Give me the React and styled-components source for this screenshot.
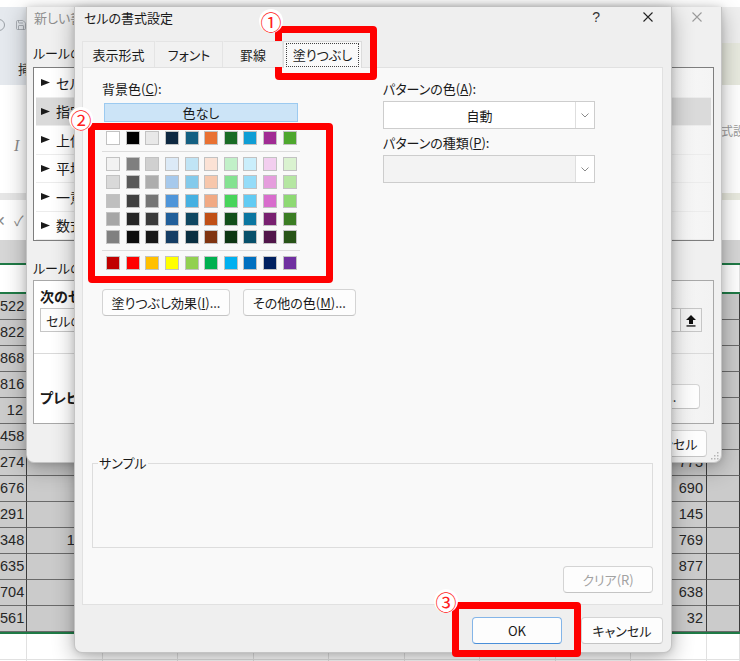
import React from 'react';
import styled, { createGlobalStyle } from 'styled-components';
import { Save } from 'lucide-react';

const GlobalStyle = createGlobalStyle`
  html, body { margin: 0; padding: 0; background: #ffffff; }
  body {
    font-family: "Noto Sans CJK JP", "Noto Sans", sans-serif;
    font-feature-settings: "palt";
    color: #1b1b1b;
  }
  * { box-sizing: border-box; }
`;

const THEME = ['#FFFFFF', '#000000', '#E8E8E8', '#0E2841', '#156082', '#E97132', '#196B24', '#0F9ED5', '#A02B93', '#4EA72E'];
const SHADES = [
  ['#F2F2F2', '#7F7F7F', '#D0D0D0', '#DCEAF7', '#C0E4F5', '#FBE2D5', '#C1F0C8', '#CAEEFB', '#F2CEEF', '#DAF2D0'],
  ['#D9D9D9', '#595959', '#ADADAD', '#A6C9EC', '#83CAEB', '#F7C7AC', '#84E291', '#95DCF8', '#E59EDD', '#B5E6A2'],
  ['#BFBFBF', '#404040', '#757575', '#4E95D9', '#45B0E1', '#F1A983', '#47D45A', '#61CBF3', '#D86DCD', '#8ED973'],
  ['#A6A6A6', '#262626', '#3A3A3A', '#215F9A', '#0F4761', '#C04F15', '#124F1A', '#0B76A0', '#782170', '#3B7D23'],
  ['#808080', '#0D0D0D', '#171717', '#153D64', '#0A2F41', '#803410', '#0D3512', '#074F6A', '#501549', '#275317'],
];
const STANDARD = ['#C00000', '#FF0000', '#FFC000', '#FFFF00', '#92D050', '#00B050', '#00B0F0', '#0070C0', '#002060', '#7030A0'];

const LEFT_NUMS = [522, 822, 868, 816, 12, 458, 274, 676, 291, 348, 635, 704, 561];
const B_NUMS = ['', '', '', '', '', '', '', '', '', '1203', '', '', ''];
const RIGHT_NUMS = [311, 905, 246, 583, 127, 460, 773, 690, 145, 769, 877, 638, 32];

const RULE_TYPES = [
  'セルの値に基づいてすべてのセルを書式設定',
  '指定の値を含むセルだけを書式設定',
  '上位または下位に入る値だけを書式設定',
  '平均より上または下の値だけを書式設定',
  '一意の値または重複する値だけを書式設定',
  '数式を使用して、書式設定するセルを決定',
];

/* ---------- screen ---------- */

const Screen = styled.div`
  position: relative;
  width: 740px;
  height: 661px;
  overflow: hidden;
  background: #ffffff;
`;

/* ---------- excel backdrop ---------- */

const Excel = styled.div`
  width: 740px;
  height: 661px;
  display: flex;
  flex-direction: column;
  background: #ffffff;
`;

const Strip = styled.div`
  flex: none;
  height: ${(p) => p.$h}px;
  display: flex;
  justify-content: space-between;
  align-items: stretch;
  background: linear-gradient(90deg, ${(p) => p.$left} 0 50%, ${(p) => p.$right || p.$left} 50% 100%);
  overflow: hidden;
`;

const StripSide = styled.div`
  display: flex;
  align-items: ${(p) => p.$align || 'center'};
  gap: ${(p) => p.$gap || 0}px;
  padding: ${(p) => p.$pad || '0'};
  width: ${(p) => p.$w}px;
  font-size: ${(p) => p.$size || 13}px;
  color: ${(p) => p.$color || '#333'};
  white-space: nowrap;
`;

const ToggleStub = styled.span`
  width: 12px;
  height: 12px;
  margin-left: -7px;
  border: 1.5px solid #9aa0a6;
  border-radius: 50%;
`;

const ItalicMark = styled.span`
  font-family: "Liberation Serif", serif;
  font-style: italic;
  font-size: 16px;
  color: #8a8a8a;
`;

const GreenRule = styled.div`
  flex: none;
  height: 2px;
  background: #1f7a46;
`;

const SheetRow = styled.div`
  flex: none;
  display: grid;
  grid-template-columns: 27px 76px repeat(7, 75.43px) 76px 1fr;
  height: ${(p) => p.$h}px;
  background: ${(p) => p.$bg};
`;

const Cell = styled.div`
  border-right: 1px solid ${(p) => p.$v};
  border-bottom: 1px solid ${(p) => p.$hz};
  padding-right: 3px;
  font-family: "Liberation Sans", Arial, sans-serif;
  font-size: 14.5px;
  line-height: 25px;
  text-align: right;
  color: #262626;
  white-space: nowrap;
  overflow: hidden;
`;

function SheetLine({ h, bg, v, hz, values }) {
  return (
    <SheetRow $h={h} $bg={bg}>
      {values.map((val, i) => (
        <Cell key={i} $v={v} $hz={hz}>{val}</Cell>
      ))}
    </SheetRow>
  );
}

function ExcelBackdrop() {
  const blank = Array(11).fill('');
  return (
    <Excel>
      <Strip $h={7} $left="#ffffff" />
      <Strip $h={36} $left="#e5e9ee" $right="#efefef">
        <StripSide $gap={10} $pad="0 0 0 0">
          <ToggleStub />
          <Save size={12} color="#9aa0a6" strokeWidth={1.6} />
        </StripSide>
      </Strip>
      <Strip $h={42} $left="#e5e9ee" $right="#e8eadf">
        <StripSide $align="flex-end" $pad="0 0 7px 18px">挿入</StripSide>
      </Strip>
      <Strip $h={108} $left="#ffffff">
        <StripSide $align="flex-start" $pad="52px 0 0 14px"><ItalicMark>I</ItalicMark></StripSide>
        <StripSide $align="flex-start" $pad="37px 0 0 0" $w={19} $size={12} $color="#9c9c9c">式設定</StripSide>
      </Strip>
      <Strip $h={7} $left="#e6e6e6" $right="#e9eadf" />
      <Strip $h={40} $left="#ffffff">
        <StripSide $gap={8} $pad="0 0 0 0" $color="#8a8a8a" $size={14}>
          <span style={{ marginLeft: -6 }}>✕</span>
          <span>✓</span>
        </StripSide>
      </Strip>
      <Strip $h={23} $left="#d6d6d6" />
      <GreenRule />
      <SheetLine h={27} bg="#ffffff" v="#e2e2e2" hz="#ffffff" values={blank} />
      <GreenRule />
      {LEFT_NUMS.map((n, i) => (
        <SheetLine
          key={i}
          h={26}
          bg="#cbcbcb"
          v="#3c3c3c"
          hz="#6a6a6a"
          values={[n, B_NUMS[i], '', '', '', '', '', '', '', RIGHT_NUMS[i], '']}
        />
      ))}
      <GreenRule />
      <SheetLine h={26} bg="#ffffff" v="#e1e1e1" hz="#e1e1e1" values={blank} />
      <SheetLine h={26} bg="#ffffff" v="#e1e1e1" hz="#e1e1e1" values={blank} />
    </Excel>
  );
}

/* ---------- shared dialog parts ---------- */

const Window = styled.div`
  position: absolute;
  left: ${(p) => p.$x}px;
  top: ${(p) => p.$y}px;
  width: ${(p) => p.$w}px;
  height: ${(p) => p.$h}px;
  display: flex;
  flex-direction: column;
  padding: ${(p) => p.$pad};
  background: ${(p) => p.$bg};
  border: 1px solid #c4c4c4;
  border-top: none;
  border-radius: 0 0 8px 8px;
  box-shadow: 0 6px 22px rgba(0, 0, 0, 0.3), 0 0 6px rgba(0, 0, 0, 0.12);
  font-size: 13px;
`;

const TitleBar = styled.div`
  flex: none;
  height: 20px;
  display: flex;
  align-items: center;
  justify-content: space-between;
  padding: 0 ${(p) => p.$right}px 0 ${(p) => p.$left}px;
  color: ${(p) => (p.$inactive ? '#8e8e8e' : '#1a1a1a')};
  white-space: nowrap;
`;

const TitleActions = styled.div`
  display: flex;
  align-items: center;
  gap: 43px;
`;

const HelpMark = styled.span`
  font-family: "Liberation Sans", Arial, sans-serif;
  font-size: 14px;
  color: #333;
`;

function CloseIcon({ color }) {
  return (
    <svg width="10" height="10" viewBox="0 0 10 10">
      <path d="M0.5 0.5 L9.5 9.5 M9.5 0.5 L0.5 9.5" stroke={color} strokeWidth="1.1" />
    </svg>
  );
}

const Label = styled.div`
  flex: none;
  margin-top: ${(p) => p.$mt || 0}px;
  line-height: 16px;
  font-size: ${(p) => p.$size || 13}px;
  font-weight: ${(p) => (p.$bold ? 700 : 400)};
  white-space: nowrap;
  color: #1a1a1a;
`;

const Button = styled.button`
  flex: none;
  width: ${(p) => p.$w}px;
  height: ${(p) => p.$h || 27}px;
  margin-top: ${(p) => p.$mt || 0}px;
  padding: 0;
  font: inherit;
  font-size: 13px;
  white-space: nowrap;
  color: ${(p) => (p.$disabled ? '#a2a2a2' : '#1a1a1a')};
  background: #fdfdfd;
  border: 1px solid ${(p) => (p.$primary ? '#84b5e8' : '#d4d4d4')};
  border-bottom-color: ${(p) => (p.$primary ? '#4a8fd9' : '#c4c4c4')};
  border-radius: 4px;
`;

/* ---------- rule dialog (behind) ---------- */

const ListBox = styled.div`
  flex: none;
  margin-top: 6px;
  height: 174px;
  padding: 1px;
  border: 1px solid #7e7e7e;
  background: linear-gradient(90deg, #ffffff 0 80%, #f4f4f4 100%);
`;

const ListRow = styled.div`
  display: flex;
  align-items: center;
  gap: 6px;
  height: 28.5px;
  margin: 0 1px;
  padding-left: 5px;
  font-size: 14px;
  white-space: nowrap;
  border-bottom: 1px solid #ececec;
  background: ${(p) => (p.$selected ? '#dadada' : 'transparent')};
`;

function Pointer() {
  return (
    <svg width="9" height="7" viewBox="0 0 9 7">
      <polygon points="0,0 9,3.5 0,7" fill="#1a1a1a" />
    </svg>
  );
}

const EditBox = styled.div`
  flex: none;
  margin-top: 4px;
  height: 144px;
  display: flex;
  flex-direction: column;
  padding: 7px 11px 0 6px;
  border: 1px solid #a8a8a8;
  background: linear-gradient(90deg, #ffffff 0 80%, #f2f2f2 100%);
`;

const ConditionRow = styled.div`
  display: flex;
  gap: 8px;
  margin-top: 4px;
  height: 24px;
`;

const Field = styled.div`
  flex: ${(p) => (p.$grow ? 1 : 'none')};
  width: ${(p) => p.$w}px;
  display: flex;
  align-items: center;
  justify-content: space-between;
  padding-left: 5px;
  font-size: 13px;
  white-space: nowrap;
  background: #fdfdfd;
  border: 1px solid #c6c6c6;
`;

const RefButton = styled.span`
  width: 21px;
  height: 22px;
  display: flex;
  align-items: center;
  justify-content: center;
  border-left: 1px solid #c6c6c6;
  background: #f3f3f3;
`;

function UploadIcon() {
  return (
    <svg width="12" height="13" viewBox="0 0 12 13">
      <polygon points="6,1 11,6 8,6 8,10 4,10 4,6 1,6" fill="#111" />
      <rect x="1.5" y="11.3" width="9" height="1.3" fill="#111" />
    </svg>
  );
}

const Divider = styled.div`
  flex: none;
  height: 1px;
  margin: ${(p) => p.$m};
  background: #dadada;
`;

const PreviewRow = styled.div`
  display: flex;
  align-items: center;
  justify-content: space-between;
  margin-top: 30px;
  height: 25px;
  padding-right: 2px;
`;

const FooterRow = styled.div`
  display: flex;
  justify-content: flex-end;
  gap: ${(p) => p.$gap}px;
  margin-top: ${(p) => p.$mt}px;
  padding-right: ${(p) => p.$pr || 0}px;
`;

const ResizeGrip = styled.svg`
  position: absolute;
  right: 2px;
  bottom: 2px;
`;

function RuleDialog() {
  return (
    <Window $x={26} $y={7} $w={696} $h={456} $bg="#f0f0f0" $pad="0 7px 0 6px">
      <TitleBar $left={1} $right={12} $inactive>
        <span>新しい書式ルール</span>
        <CloseIcon color="#9a9a9a" />
      </TitleBar>
      <Label $mt={18}>ルールの種類を選択してください(<u>S</u>):</Label>
      <ListBox>
        {RULE_TYPES.map((t, i) => (
          <ListRow key={t} $selected={i === 1}>
            <Pointer />
            <span>{t}</span>
          </ListRow>
        ))}
      </ListBox>
      <Label $mt={19}>ルールの内容を編集してください(<u>E</u>):</Label>
      <EditBox>
        <Label $bold $size={14}>次のセルのみを書式設定(<u>O</u>):</Label>
        <ConditionRow>
          <Field $w={130}>セルの値</Field>
          <Field $w={130}>次の値の間</Field>
          <Field $w={150} />
          <Field $grow>
            <span />
            <RefButton><UploadIcon /></RefButton>
          </Field>
        </ConditionRow>
        <Divider $m="21px -11px 0 -6px" />
        <PreviewRow>
          <Label $bold $size={14}>プレビュー:</Label>
          <Button $w={100} $h={25}>書式(<u>F</u>)...</Button>
        </PreviewRow>
      </EditBox>
      <FooterRow $gap={10} $mt={6} $pr={7}>
        <Button $w={78} $h={27}>OK</Button>
        <Button $w={78} $h={27}>キャンセル</Button>
      </FooterRow>
      <ResizeGrip width="9" height="9" viewBox="0 0 9 9">
        <g fill="#b5b5b5">
          <rect x="7" y="1" width="1.5" height="1.5" />
          <rect x="4" y="4" width="1.5" height="1.5" />
          <rect x="7" y="4" width="1.5" height="1.5" />
          <rect x="1" y="7" width="1.5" height="1.5" />
          <rect x="4" y="7" width="1.5" height="1.5" />
          <rect x="7" y="7" width="1.5" height="1.5" />
        </g>
      </ResizeGrip>
    </Window>
  );
}

/* ---------- format dialog (front) ---------- */

const TabStrip = styled.div`
  flex: none;
  display: flex;
  align-items: flex-end;
  height: 26px;
  margin-top: 14px;
  position: relative;
  z-index: 1;
`;

const Tab = styled.div`
  width: ${(p) => p.$w}px;
  height: ${(p) => (p.$active ? 27 : 26)}px;
  margin-bottom: ${(p) => (p.$active ? -1 : 0)}px;
  display: flex;
  align-items: center;
  justify-content: center;
  white-space: nowrap;
  background: ${(p) => (p.$active ? '#f9f9f9' : '#f1f1f1')};
  border: 1px solid ${(p) => (p.$active ? '#dcdcdc' : '#e4e4e4')};
  border-bottom: none;
  border-left-color: ${(p) => (p.$first || p.$active ? (p.$active ? '#dcdcdc' : '#e4e4e4') : 'transparent')};
`;

const FocusLabel = styled.span`
  padding: 1px 6px 2px;
  border: 1px dotted #444;
`;

const TabPanel = styled.div`
  flex: none;
  height: 538px;
  display: flex;
  flex-direction: column;
  padding: 13px 9px 11px 9px;
  background: #f9f9f9;
  border: 1px solid #e1e1e1;
`;

const PanelColumns = styled.div`
  display: grid;
  grid-template-columns: 281px 212px;
  padding-left: 10px;
`;

const Column = styled.div`
  display: flex;
  flex-direction: column;
`;

const NoColorButton = styled.div`
  width: 194px;
  height: 19px;
  margin: 6px 0 0 2px;
  display: flex;
  align-items: center;
  justify-content: center;
  background: #cce4f7;
  border: 1px solid #9ccaf0;
`;

const PaletteGrid = styled.div`
  display: grid;
  grid-template-columns: repeat(10, 14px);
  column-gap: 5.63px;
  row-gap: ${(p) => p.$rowGap || 0}px;
  margin-top: ${(p) => p.$mt || 0}px;
  padding-left: 4px;
`;

const Swatch = styled.div`
  width: 14px;
  height: 14px;
  background: ${(p) => p.$color};
  border: 1px solid #c2c2c2;
`;

const PaletteRule = styled.div`
  width: 198px;
  height: 1px;
  margin: 5.5px 0 5.5px 0;
  background: #dcdcdc;
`;

const ButtonPair = styled.div`
  display: flex;
  gap: 13px;
  margin-top: 19px;
`;

const Select = styled.div`
  flex: none;
  display: flex;
  width: 212px;
  height: 28px;
  margin-top: ${(p) => p.$mt}px;
  background: ${(p) => (p.$disabled ? '#f3f3f3' : '#ffffff')};
  border: 1px solid #cdcdcd;
`;

const SelectValue = styled.div`
  flex: 1;
  display: flex;
  align-items: center;
  justify-content: center;
`;

const SelectArrow = styled.div`
  width: 19px;
  display: flex;
  align-items: center;
  justify-content: center;
  background: #ffffff;
  border-left: 1px solid #dedede;
`;

function Chevron() {
  return (
    <svg width="8" height="5" viewBox="0 0 8 5">
      <polyline points="0.5,0.5 4,4 7.5,0.5" fill="none" stroke="#8a8a8a" strokeWidth="1" />
    </svg>
  );
}

const SampleBox = styled.fieldset`
  flex: none;
  height: 93px;
  margin: auto 0 0 0;
  padding: 0;
  border: 1px solid #dddddd;
`;

const SampleLegend = styled.legend`
  margin-left: 5px;
  padding: 0 1px;
  line-height: 16px;
  font-size: 13px;
  color: #1a1a1a;
`;

function Palette() {
  return (
    <>
      <PaletteGrid $mt={9}>
        {THEME.map((c) => <Swatch key={c} $color={c} />)}
      </PaletteGrid>
      <PaletteRule />
      <PaletteGrid $rowGap={4.25}>
        {SHADES.flat().map((c, i) => <Swatch key={i} $color={c} />)}
      </PaletteGrid>
      <PaletteRule />
      <PaletteGrid>
        {STANDARD.map((c) => <Swatch key={c} $color={c} />)}
      </PaletteGrid>
    </>
  );
}

function FormatDialog() {
  return (
    <Window $x={74} $y={7} $w={598} $h={646} $bg="#efefef" $pad="0 8px 0 7px">
      <TitleBar $left={2} $right={10}>
        <span>セルの書式設定</span>
        <TitleActions>
          <HelpMark>?</HelpMark>
          <CloseIcon color="#222" />
        </TitleActions>
      </TitleBar>
      <TabStrip>
        <Tab $w={73} $first>表示形式</Tab>
        <Tab $w={68}>フォント</Tab>
        <Tab $w={60}>罫線</Tab>
        <Tab $w={79} $active><FocusLabel>塗りつぶし</FocusLabel></Tab>
      </TabStrip>
      <TabPanel>
        <PanelColumns>
          <Column>
            <Label>背景色(<u>C</u>):</Label>
            <NoColorButton>色なし</NoColorButton>
            <Palette />
            <ButtonPair>
              <Button $w={128}>塗りつぶし効果(<u>I</u>)...</Button>
              <Button $w={113}>その他の色(<u>M</u>)...</Button>
            </ButtonPair>
          </Column>
          <Column>
            <Label>パターンの色(<u>A</u>):</Label>
            <Select $mt={4}>
              <SelectValue>自動</SelectValue>
              <SelectArrow><Chevron /></SelectArrow>
            </Select>
            <Label $mt={6}>パターンの種類(<u>P</u>):</Label>
            <Select $mt={4} $disabled>
              <SelectValue />
              <SelectArrow><Chevron /></SelectArrow>
            </Select>
          </Column>
        </PanelColumns>
        <SampleBox>
          <SampleLegend>サンプル</SampleLegend>
        </SampleBox>
        <FooterRow $gap={0} $mt={18}>
          <Button $w={90} $disabled>クリア(R)</Button>
        </FooterRow>
      </TabPanel>
      <FooterRow $gap={19} $mt={12}>
        <Button $w={90} $primary>OK</Button>
        <Button $w={82}>キャンセル</Button>
      </FooterRow>
    </Window>
  );
}

/* ---------- annotations ---------- */

const Callout = styled.div`
  position: absolute;
  left: ${(p) => p.$x}px;
  top: ${(p) => p.$y}px;
  width: ${(p) => p.$w}px;
  height: ${(p) => p.$h}px;
  border: 7px solid #ff0000;
  border-radius: 4px;
  pointer-events: none;
`;

const StepBadge = styled.div`
  position: absolute;
  left: ${(p) => p.$cx - 12}px;
  top: ${(p) => p.$cy - 12}px;
  width: 24px;
  height: 24px;
  display: flex;
  align-items: center;
  justify-content: center;
  border-radius: 50%;
  background: #ffffff;
  color: #ff2020;
  font-size: 21px;
  line-height: 1;
`;

export default function App() {
  return (
    <>
      <GlobalStyle />
      <Screen>
        <ExcelBackdrop />
        <RuleDialog />
        <FormatDialog />
        <Callout $x={275} $y={26} $w={102} $h={54} />
        <Callout $x={88} $y={123} $w={245} $h={160} />
        <Callout $x={452} $y={602} $w={129} $h={55} />
        <StepBadge $cx={271} $cy={21}>①</StepBadge>
        <StepBadge $cx={81} $cy={119}>②</StepBadge>
        <StepBadge $cx={446} $cy={601}>③</StepBadge>
      </Screen>
    </>
  );
}
